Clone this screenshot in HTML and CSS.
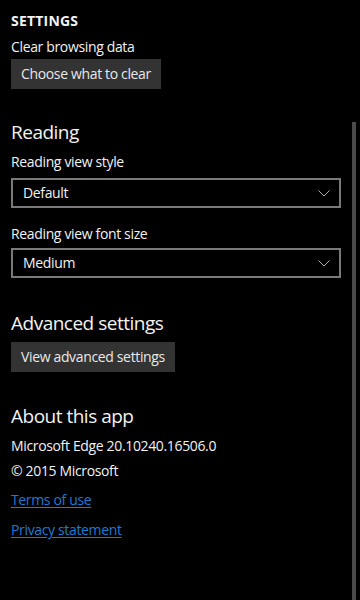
FILE: index.html
```html
<!DOCTYPE html>
<html>
<head>
<meta charset="utf-8">
<link rel="stylesheet" href="styles.css">
</head>
<body>
<main class="page">
  <div class="header">SETTINGS</div>
  <div class="label first">Clear browsing data</div>
  <button class="btn btn-clear">Choose what to clear</button>

  <h2 class="section reading">Reading</h2>
  <div class="label l1">Reading view style</div>
  <div class="select s1"><span>Default</span>
    <svg class="chev" width="12" height="7" viewBox="0 0 12 7"><path d="M0.5 0.5 L6 6 L11.5 0.5" fill="none" stroke="#b0b0b0" stroke-width="1"/></svg>
  </div>
  <div class="label l2">Reading view font size</div>
  <div class="select s2"><span>Medium</span>
    <svg class="chev" width="12" height="7" viewBox="0 0 12 7"><path d="M0.5 0.5 L6 6 L11.5 0.5" fill="none" stroke="#b0b0b0" stroke-width="1"/></svg>
  </div>

  <h2 class="section advanced">Advanced settings</h2>
  <button class="btn btn-adv">View advanced settings</button>

  <h2 class="section about">About this app</h2>
  <div class="label v1">Microsoft Edge 20.10240.16506.0</div>
  <div class="label v2">© 2015 Microsoft</div>
  <a class="link terms" href="#">Terms of use</a>
  <a class="link privacy" href="#">Privacy statement</a>
</main>
<div class="scrollbar"></div>
</body>
</html>
```
FILE: styles.css
```css
html, body {
  margin: 0;
  padding: 0;
  background: #000;
  width: 360px;
  height: 600px;
  overflow: hidden;
}
body {
  font-family: "Open Sans", "Noto Sans", sans-serif;
  color: #f2f2f2;
  position: relative;
}
.page {
  display: flex;
  flex-direction: column;
  align-items: flex-start;
  padding: 11px 0 0 11px;
}
.header {
  font-size: 14px;
  font-weight: 700;
  line-height: 20px;
  letter-spacing: 0.2px;
}
.label {
  font-size: 14px;
  line-height: 20px;
  letter-spacing: -0.35px;
}
.first { margin-top: 6px; }
.btn {
  font-family: inherit;
  font-size: 14px;
  letter-spacing: -0.35px;
  color: #e8e8e8;
  background: #333333;
  border: none;
  height: 30px;
  line-height: 30px;
  padding: 0 10px;
  margin: 2px 0 0 0;
}
.btn-adv { margin-top: 5px; }
.section {
  margin: 0;
  font-size: 19px;
  font-weight: 400;
  line-height: 28px;
  letter-spacing: -0.5px;
}
.reading { margin-top: 29px; }
.l1 { margin-top: 6px; }
.select {
  box-sizing: border-box;
  width: 330px;
  height: 30px;
  border: 2px solid #7a7a7a;
  display: flex;
  align-items: center;
  justify-content: space-between;
  padding: 0 9px 0 10px;
  font-size: 14px;
  letter-spacing: -0.35px;
  line-height: 26px;
  margin-top: 6px;
}
.chev { display: block; }
.l2 { margin-top: 16px; }
.s2 { margin-top: 4px; }
.advanced { margin-top: 31px; }
.about { margin-top: 30px; }
.v1 { margin-top: 6px; }
.v2 { margin-top: 5px; }
.link {
  font-size: 14px;
  line-height: 20px;
  letter-spacing: -0.35px;
  color: #2079d0;
  text-decoration: underline;
  text-underline-offset: 2px;
}
.terms { margin-top: 9px; }
.privacy { margin-top: 10px; }
.scrollbar {
  position: absolute;
  left: 352px;
  top: 122px;
  width: 4px;
  height: 478px;
  background: #4a4a4a;
}
```
